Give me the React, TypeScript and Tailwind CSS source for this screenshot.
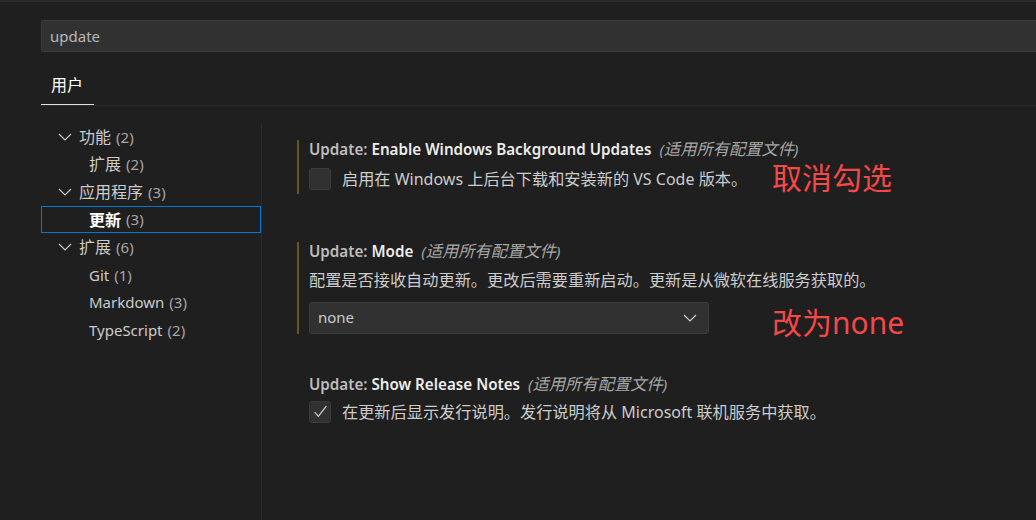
import React from 'react'

const FONT = { fontFamily: '"Noto Sans", "Noto Sans CJK SC", sans-serif' }

// CJK glyphs in the original are a touch bigger than the Latin ones
const Mixed: React.FC<{ text: string; cjk?: string }> = ({ text, cjk = 'text-[16px]' }) => (
  <>
    {text.split(/([\u3000-\u303f\u4e00-\u9fff\uff00-\uffef]+)/).map((part, i) =>
      i % 2 === 1 ? (
        <span key={i} className={cjk}>
          {part}
        </span>
      ) : (
        <React.Fragment key={i}>{part}</React.Fragment>
      )
    )}
  </>
)

const Chevron: React.FC<{ className?: string }> = ({ className }) => (
  <svg className={className} width="14" height="8" viewBox="0 0 14 8" fill="none">
    <polyline points="1,1 7,7 13,1" stroke="currentColor" strokeWidth="1.2" />
  </svg>
)

type TocItem = { label: string; count: number; level: 1 | 2; selected?: boolean }

const toc: TocItem[] = [
  { label: '功能', count: 2, level: 1 },
  { label: '扩展', count: 2, level: 2 },
  { label: '应用程序', count: 3, level: 1 },
  { label: '更新', count: 3, level: 2, selected: true },
  { label: '扩展', count: 6, level: 1 },
  { label: 'Git', count: 1, level: 2 },
  { label: 'Markdown', count: 3, level: 2 },
  { label: 'TypeScript', count: 2, level: 2 },
]

const Checkbox: React.FC<{ checked?: boolean }> = ({ checked }) => (
  <div className="w-[22px] h-[22px] shrink-0 rounded-[3px] bg-[#313131] border border-[#3c3c3c] flex items-center justify-center">
    {checked && (
      <svg width="17" height="17" viewBox="0 0 16 16" fill="none">
        <polyline points="2.5,8.5 6,12.5 13.5,3" stroke="#d4d4d4" strokeWidth="1.1" />
      </svg>
    )}
  </div>
)

const Title: React.FC<{ name: string }> = ({ name }) => (
  <div className="h-[18px] leading-[18px] whitespace-nowrap text-[15.2px]">
    <span className="font-semibold text-[#bdbdbd]">Update: </span>
    <span className="font-semibold text-[#ececec]">{name}</span>
    <span className="italic text-[#a8a8a8] ml-[8px]">
      <Mixed text="(适用所有配置文件)" cjk="text-[16.3px]" />
    </span>
  </div>
)

const Desc: React.FC<{ text: string }> = ({ text }) => (
  <span className="leading-[18px] whitespace-nowrap text-[16px]">
    <Mixed text={text} cjk="text-[16.2px]" />
  </span>
)

export default function App() {
  return (
    <div
      className="relative w-[1036px] h-[520px] overflow-hidden bg-[#1f1f1f] border-t-2 border-[#2b2b2b] text-[15px] text-[#cccccc] flex flex-col"
      style={FONT}
    >
      {/* Search */}
      <div className="pl-[41px] mt-[18px]">
        <div className="h-[32px] bg-[#313131] border border-r-0 border-[#3c3c3c] rounded-l-[3px] flex items-center pl-[8px] text-[15px] text-[#b8b8b8]">
          update
        </div>
      </div>

      {/* Tabs */}
      <div className="ml-[41px] mt-[14px] border-b border-[#2b2b2b] flex">
        <div className="h-[39px] pl-[10px] pr-[11px] flex items-center border-b border-[#e0e0e0] text-[16px] text-white">
          用户
        </div>
      </div>

      {/* Body */}
      <div className="flex flex-1">
        <div className="w-[261px] shrink-0 pl-[41px] pt-[17px] flex flex-col">
          {toc.map((t, i) => (
            <div
              key={i}
              className={
                'h-[27.6px] flex items-center whitespace-nowrap border ' +
                (t.selected ? 'border-[#0078d4]' : 'border-transparent')
              }
            >
              {t.level === 1 ? (
                <>
                  <Chevron className="ml-[16px] mr-[7px] text-[#c5c5c5]" />
                  <span>
                    <Mixed text={t.label} />
                  </span>
                </>
              ) : (
                <span className={'ml-[47px] ' + (t.selected ? 'font-bold text-white' : '')}>
                  <Mixed text={t.label} />
                </span>
              )}
              <span className="ml-[5px] text-[#a6a6a6]">({t.count})</span>
            </div>
          ))}
        </div>

        <div className="w-px bg-[#2b2b2b] mt-[17px]" />

        <div className="flex-1 pl-[35px] pt-[34px] flex flex-col">
          {/* Item 1 */}
          <div className="border-l-2 border-[#6b5216] pl-[10px] pb-[3px]">
            <Title name="Enable Windows Background Updates" />
            <div className="mt-[10px] flex items-center">
              <Checkbox />
              <span className="ml-[11px]">
                <Desc text="启用在 Windows 上后台下载和安装新的 VS Code 版本。" />
              </span>
            </div>
          </div>

          {/* Item 2 */}
          <div className="mt-[48px] border-l-2 border-[#6b5216] pl-[10px]">
            <Title name="Mode" />
            <div className="mt-[11px] h-[18px] leading-[18px]">
              <Desc text="配置是否接收自动更新。更改后需要重新启动。更新是从微软在线服务获取的。" />
            </div>
            <div className="mt-[13px] w-[400px] h-[32px] bg-[#313131] border border-[#3c3c3c] rounded-[3px] flex items-center justify-between pl-[8px] pr-[11px]">
              <span>none</span>
              <Chevron className="text-[#cccccc]" />
            </div>
          </div>

          {/* Item 3 */}
          <div className="mt-[41px] border-l-2 border-transparent pl-[10px]">
            <Title name="Show Release Notes" />
            <div className="mt-[8px] flex items-center">
              <Checkbox checked />
              <span className="ml-[11px]">
                <Desc text="在更新后显示发行说明。发行说明将从 Microsoft 联机服务中获取。" />
              </span>
            </div>
          </div>
        </div>
      </div>

      {/* Annotations */}
      <div className="absolute left-[772px] top-[156px] text-[30px] leading-[40px] text-[#f54848]">取消勾选</div>
      <div className="absolute left-[772px] top-[301px] text-[30px] leading-[40px] text-[#f54848]">改为none</div>
    </div>
  )
}
